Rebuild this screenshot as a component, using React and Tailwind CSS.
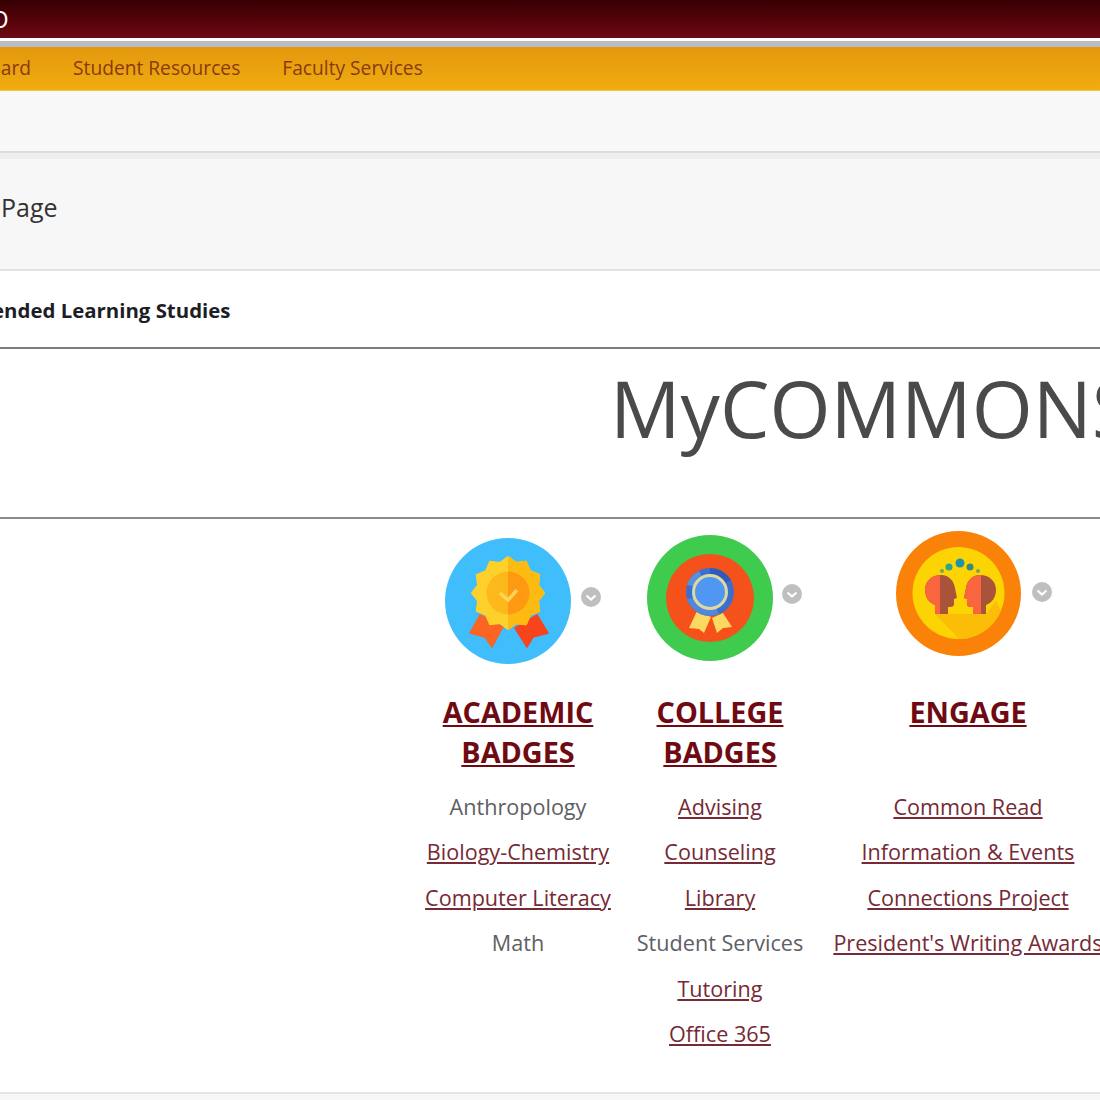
const FONT = "font-['Open_Sans',sans-serif]";

function burstPoints(cx, cy, outer, inner, count) {
  const pts = [];
  for (let i = 0; i < count * 2; i++) {
    const r = i % 2 === 0 ? outer : inner;
    const a = (Math.PI * i) / count - Math.PI / 2;
    pts.push(`${(cx + r * Math.cos(a)).toFixed(1)},${(cy + r * Math.sin(a)).toFixed(1)}`);
  }
  return pts.join(" ");
}

function AcademicIcon() {
  const burst = burstPoints(63, 55, 36, 31, 12);
  return (
    <svg viewBox="0 0 126 126" className="h-[126px] w-[126px] shrink-0">
      <defs>
        <clipPath id="acad-right"><rect x="63" y="0" width="63" height="126" /></clipPath>
      </defs>
      <circle cx="63" cy="63" r="63" fill="#40bdfb" />
      <path d="M35 77 L25 95 L40 99 L47 109 L58 89 Z" fill="#fb6422" stroke="#fb6422" strokeWidth="1.5" strokeLinejoin="round" />
      <path d="M92 77 L103 95 L88 99 L82 109 L70 90 Z" fill="#f8441c" stroke="#f8441c" strokeWidth="1.5" strokeLinejoin="round" />
      <polygon points={burst} fill="#fdd02c" stroke="#fdd02c" strokeWidth="2" strokeLinejoin="round" />
      <polygon points={burst} fill="#fdbb12" stroke="#fdbb12" strokeWidth="2" strokeLinejoin="round" clipPath="url(#acad-right)" />
      <circle cx="63" cy="55" r="21.5" fill="#fdb91c" />
      <circle cx="63" cy="55" r="21.5" fill="#fd9a12" clipPath="url(#acad-right)" />
      <path d="M55 55 L63 62 L72 52" fill="none" stroke="#fdd458" strokeWidth="3.5" />
    </svg>
  );
}

function CollegeIcon() {
  return (
    <svg viewBox="0 0 126 126" className="h-[126px] w-[126px] shrink-0">
      <circle cx="63" cy="63" r="63" fill="#3ecb4e" />
      <circle cx="63" cy="63" r="44" fill="#f5511b" />
      <path d="M50 76 L42 93 L52 94 L57 98 L64 82 Z" fill="#fbd860" />
      <path d="M65 83 L70 98 L76 93 L85 92 L76 78 Z" fill="#fbd860" />
      <circle cx="63" cy="57" r="24" fill="#3a6fd0" />
      <path d="M63 33 A24 24 0 0 1 84 45 L75 50 A12 12 0 0 0 63 45 Z" fill="#2f5cb8" />
      <path d="M40 64 A24 24 0 0 0 72 79 L68 70 A12 12 0 0 1 52 62 Z" fill="#5288dc" />
      <path d="M40 50 A24 24 0 0 1 52 36 L56 44 A12 12 0 0 0 50 52 Z" fill="#5890e0" />
      <circle cx="63" cy="57" r="16.5" fill="#4f97f0" stroke="#ddd9a0" strokeWidth="3" />
    </svg>
  );
}

const HEAD_LEFT = "M39 83 L39 74 C33 72 29 66 29 59 C29 50 36 44 45 44 C53 44 58 50 59 57 L61 67 L58 68 L58 73 C58 76 55 76 52 76 L52 83 Z";
const HEAD_RIGHT = "M90 83 L90 74 C96 72 100 66 100 59 C100 50 93 44 84 44 C76 44 71 50 70 57 L68 67 L71 68 L71 73 C71 76 74 76 77 76 L77 83 Z";

function EngageIcon() {
  return (
    <svg viewBox="0 0 126 126" className="h-[126px] w-[126px] shrink-0">
      <defs>
        <clipPath id="eng-inner"><circle cx="62.5" cy="62" r="46" /></clipPath>
        <clipPath id="eng-left-half"><rect x="0" y="0" width="44" height="126" /></clipPath>
        <clipPath id="eng-right-half"><rect x="0" y="0" width="85" height="126" /></clipPath>
      </defs>
      <circle cx="62.5" cy="62.5" r="62.5" fill="#fb8209" />
      <circle cx="62.5" cy="62" r="46" fill="#fcd404" />
      <path d="M39 83 L75 120 L120 110 L100 70 L90 83 Z" fill="#fbbd08" clipPath="url(#eng-inner)" />
      <path d={HEAD_LEFT} fill="#a9543a" />
      <path d={HEAD_LEFT} fill="#f8653f" clipPath="url(#eng-left-half)" />
      <path d={HEAD_RIGHT} fill="#a9543a" />
      <path d={HEAD_RIGHT} fill="#f8653f" clipPath="url(#eng-right-half)" />
      <circle cx="64" cy="32" r="4.5" fill="#1d94a8" />
      <circle cx="53" cy="36" r="3.5" fill="#2ea58a" />
      <circle cx="74" cy="36" r="3.5" fill="#3a8a78" />
      <circle cx="46" cy="40" r="2" fill="#6ea860" />
      <circle cx="82" cy="40" r="2" fill="#6ea860" />
    </svg>
  );
}

function ChevronBadge() {
  return (
    <span className="flex h-5 w-5 shrink-0 items-center justify-center rounded-full bg-[#bfbfbf]">
      <svg viewBox="0 0 20 20" className="h-5 w-5">
        <path d="M5.5 8.5 L10 12.5 L14.5 8.5" fill="none" stroke="#ffffff" strokeWidth="2.2" />
      </svg>
    </span>
  );
}

function Item({ label, href }) {
  return (
    <li className="h-[45.6px] leading-[45.6px] whitespace-nowrap">
      {href ? <a className="text-[#752a35] underline" href="#">{label}</a> : <span className="text-[#5d6064]">{label}</span>}
    </li>
  );
}

const columns = [
  {
    title: ["ACADEMIC", "BADGES"],
    icon: <AcademicIcon />,
    width: "w-[202px]",
    iconBox: "pt-[19px] pl-[28px]",
    badge: "ml-[10px] mt-[49px]",
    items: [["Anthropology", false], ["Biology-Chemistry", true], ["Computer Literacy", true], ["Math", false]],
  },
  {
    title: ["COLLEGE", "BADGES"],
    icon: <CollegeIcon />,
    width: "w-[202px]",
    iconBox: "pt-[16px] pl-[28px]",
    badge: "ml-[9px] mt-[49px]",
    items: [["Advising", true], ["Counseling", true], ["Library", true], ["Student Services", false], ["Tutoring", true], ["Office 365", true]],
  },
  {
    title: ["ENGAGE"],
    icon: <EngageIcon />,
    width: "w-[294px]",
    iconBox: "pt-[12px] pl-[75px]",
    badge: "ml-[10px] mt-[51px]",
    items: [["Common Read", true], ["Information & Events", true], ["Connections Project", true], ["President's Writing Awards", true]],
  },
];

export default function App() {
  return (
    <div className={`h-[1100px] w-[1100px] overflow-hidden bg-white ${FONT}`}>
      <div className="h-[38px] overflow-hidden bg-gradient-to-b from-[#360003] to-[#700a14] text-[24px] leading-[38px] text-white">
        <span className="-ml-[10px] block">O</span>
      </div>
      <div className="h-[3px] bg-white" />
      <div className="h-[6px] bg-[#b9bcc2]" />
      <nav className="flex h-[44px] items-center overflow-hidden whitespace-nowrap border-b border-[#ecc94a] bg-gradient-to-b from-[#e3980d] to-[#f0ac10] text-[19.2px] text-[#8a3a10]">
        <span className="ml-[-68px]">Dashboard</span>
        <span className="ml-[42px]">Student Resources</span>
        <span className="ml-[42px]">Faculty Services</span>
      </nav>
      <div className="h-[62px] border-b-2 border-[#dcdcdc] bg-[#f8f8f8]" />
      <div className="h-[6px] bg-[#eeeeee]" />
      <div className="h-[112px] border-b-2 border-[#e2e2e2] bg-[#f7f7f7] pl-[1px] pt-[31px] text-[25px] leading-[34px] text-[#333333]">
        Page
      </div>
      <div className="h-[78px] overflow-hidden whitespace-nowrap border-b-2 border-[#7c7c7c] pt-[24px] text-[20.4px] font-bold leading-[30px] text-[#1d1d26]">
        <span className="ml-[-40px] block">Extended Learning Studies</span>
      </div>
      <div className="h-[170px] overflow-hidden whitespace-nowrap border-b-2 border-[#8a8a8a] pl-[610px] text-[78.5px] leading-[118px] text-[#4a4a4a]">
        MyCOMMONS
      </div>
      <div className="ml-[417px] flex h-[573px] text-center text-[21.6px]">
        {columns.map((col) => (
          <div key={col.title[0]} className={`${col.width} shrink-0`}>
            <div className={`flex h-[173px] items-start ${col.iconBox}`}>
              {col.icon}
              <span className={col.badge}><ChevronBadge /></span>
            </div>
            <h2 className="h-[80px] text-[28.8px] font-bold leading-[40px] text-[#700a12] underline">
              {col.title.map((line) => <div key={line}>{line}</div>)}
            </h2>
            <ul className="pt-[11.5px]">
              {col.items.map(([label, href]) => <Item key={label} label={label} href={href} />)}
            </ul>
          </div>
        ))}
      </div>
      <div className="h-[2px] bg-[#e4e4e4]" />
      <div className="h-[6px] bg-[#f7f7f7]" />
    </div>
  );
}
